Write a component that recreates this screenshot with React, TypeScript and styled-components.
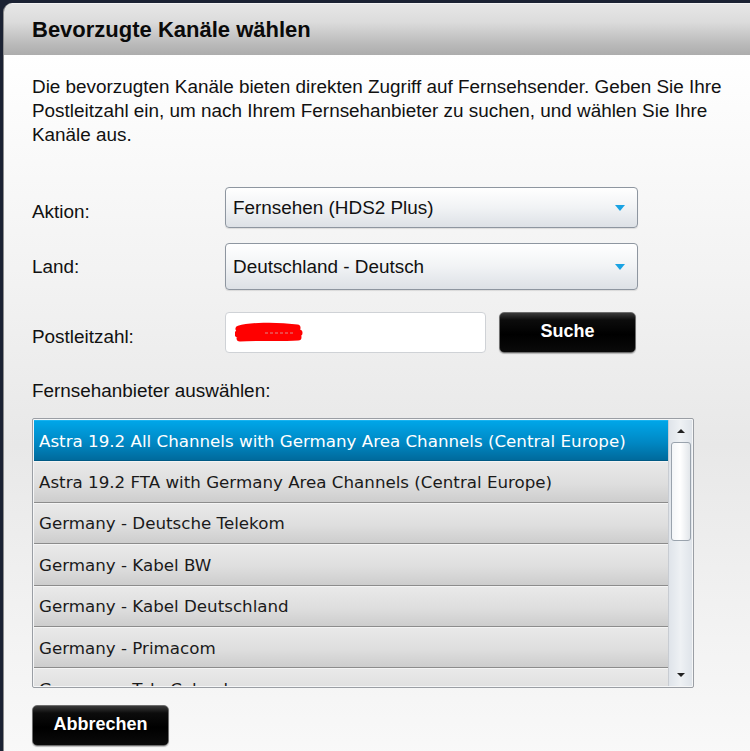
import React from "react";
import styled, { createGlobalStyle } from "styled-components";

const Global = createGlobalStyle`
  html, body { margin: 0; padding: 0; background: #1b2233; overflow: hidden; }
  body { width: 750px; height: 751px; }
`;

const Dialog = styled.div`
  margin: 3px 0 0 3px;
  width: 760px;
  height: 760px;
  border-top-left-radius: 9px;
  overflow: hidden;
  border-left: 1px solid #8c8c8c;
  display: flex;
  flex-direction: column;
  font-family: "Liberation Sans", Arial, sans-serif;
`;

const Header = styled.div`
  height: 52px;
  flex: none;
  box-sizing: border-box;
  padding-left: 28px;
  display: flex;
  align-items: center;
  background: linear-gradient(#e6e6e6 0%, #dcdcdc 35%, #b9b9b9 80%, #adadad 100%);
  border-top: 1px solid #f2f2f2;
`;

const Title = styled.h1`
  margin: 0;
  font-size: 22px;
  font-weight: bold;
  color: #0a0a0a;
`;

const Body = styled.div`
  flex: 1;
  padding: 20px 0 0 28px;
  background: linear-gradient(#ffffff 0%, #f3f3f3 30%, #e8e8e8 55%, #f4f4f4 85%, #f9f9f9 100%);
`;

const Intro = styled.p`
  margin: 0;
  width: 712px;
  font-size: 18.9px;
  line-height: 24px;
  color: #111;
`;

const Form = styled.div`
  margin-top: 40px;
  display: flex;
  flex-direction: column;
`;

const Row = styled.div<{ $h: number; $mt: number }>`
  display: flex;
  align-items: center;
  height: ${(p) => p.$h}px;
  margin-top: ${(p) => p.$mt}px;
`;

const Label = styled.div<{ $dy?: number }>`
  width: 193px;
  font-size: 18.9px;
  color: #111;
  transform: translateY(${(p) => p.$dy ?? 0}px);
`;

const Select = styled.div`
  box-sizing: border-box;
  width: 413px;
  height: 100%;
  border: 1px solid #8e96a0;
  border-radius: 4px;
  background: linear-gradient(#ffffff 0%, #f1f3f5 50%, #dde1e6 100%);
  display: flex;
  align-items: center;
  justify-content: space-between;
  padding: 0 12px 0 7px;
  font-size: 18.9px;
  color: #111;
  box-shadow: 0 1px 1px rgba(0,0,0,0.1);
`;

const Arrow = styled.span`
  width: 0;
  height: 0;
  border-left: 5px solid transparent;
  border-right: 5px solid transparent;
  border-top: 6px solid #1aa3e3;
`;

const Input = styled.div`
  box-sizing: border-box;
  width: 261px;
  height: 100%;
  border: 1px solid #cfd2d6;
  border-radius: 4px;
  background: #fff;
  display: flex;
  align-items: center;
  padding-left: 9px;
`;

const Button = styled.button<{ $w: number }>`
  box-sizing: border-box;
  width: ${(p) => p.$w}px;
  height: 41px;
  border: 1px solid #6e6e6e;
  border-radius: 5px;
  background: linear-gradient(#3a3a3a 0%, #0c0c0c 18%, #000 55%, #0a0a0a 100%);
  color: #fff;
  font-family: "Liberation Sans", Arial, sans-serif;
  font-size: 18px;
  font-weight: bold;
  padding: 0;
  box-shadow: 0 1px 1px rgba(0,0,0,0.25);
`;

const SearchButton = styled(Button)`
  margin-left: 13px;
  padding-bottom: 3px;
`;

const ListLabel = styled.div`
  margin-top: 27px;
  font-size: 18.9px;
  line-height: 22px;
  color: #111;
`;

const ListBox = styled.div`
  box-sizing: border-box;
  margin-top: 16px;
  width: 662px;
  height: 270px;
  border: 1px solid #9a9ea4;
  border-radius: 2px;
  background: #f5f6f7;
  padding: 1px;
  display: flex;
  overflow: hidden;
`;

const Items = styled.div`
  flex: 1;
  overflow: hidden;
`;

const Item = styled.div<{ $sel?: boolean }>`
  box-sizing: border-box;
  height: 41.4px;
  padding-left: 5px;
  display: flex;
  align-items: center;
  font-family: Tahoma, "DejaVu Sans", sans-serif;
  font-size: 16.7px;
  color: ${(p) => (p.$sel ? "#fff" : "#1a1a1a")};
  background: ${(p) =>
    p.$sel
      ? "linear-gradient(#00a6e8 0%, #0088c4 55%, #006a9c 100%)"
      : "linear-gradient(#e9e9e9 0%, #dedede 55%, #cdcdcd 100%)"};
  border-top: 1px solid ${(p) => (p.$sel ? "#19b3ef" : "#f4f4f4")};
  border-bottom: 1px solid ${(p) => (p.$sel ? "#005a85" : "#8c8c8c")};
`;

const Scrollbar = styled.div`
  width: 23px;
  flex: none;
  display: flex;
  flex-direction: column;
  align-items: center;
  background: linear-gradient(90deg, #dfe4ea, #eef1f4 50%, #dfe4ea);
  border-left: 1px solid #c8ccd2;
`;

const ScrollArrow = styled.div<{ $up?: boolean }>`
  height: 22px;
  display: flex;
  align-items: center;
  justify-content: center;
  &::after {
    content: "";
    width: 0;
    height: 0;
    border-left: 4px solid transparent;
    border-right: 4px solid transparent;
    ${(p) => (p.$up ? "border-bottom: 4px solid #222;" : "border-top: 4px solid #222;")}
  }
`;

const Track = styled.div`
  flex: 1;
  width: 100%;
  display: flex;
  justify-content: center;
`;

const Thumb = styled.div`
  box-sizing: border-box;
  width: 20px;
  height: 99px;
  border: 1px solid #9aa3ad;
  border-radius: 3px;
  background: linear-gradient(90deg, #f4f6f8, #ffffff 45%, #e2e6ea);
`;

const CancelWrap = styled.div`
  margin-top: 17px;
`;

const CancelButton = styled(Button)`
  padding-bottom: 2px;
`;

const items = [
  "Astra 19.2 All Channels with Germany Area Channels (Central Europe)",
  "Astra 19.2 FTA with Germany Area Channels (Central Europe)",
  "Germany - Deutsche Telekom",
  "Germany - Kabel BW",
  "Germany - Kabel Deutschland",
  "Germany - Primacom",
  "Germany - Tele Columbus",
];

export default function App() {
  return (
    <>
      <Global />
      <Dialog>
        <Header>
          <Title>Bevorzugte Kanäle wählen</Title>
        </Header>
        <Body>
          <Intro>
            Die bevorzugten Kanäle bieten direkten Zugriff auf Fernsehsender. Geben Sie Ihre
            Postleitzahl ein, um nach Ihrem Fernsehanbieter zu suchen, und wählen Sie Ihre
            Kanäle aus.
          </Intro>
          <Form>
            <Row $h={41} $mt={0}>
              <Label $dy={4}>Aktion:</Label>
              <Select>
                <span>Fernsehen (HDS2 Plus)</span>
                <Arrow />
              </Select>
            </Row>
            <Row $h={47} $mt={15}>
              <Label>Land:</Label>
              <Select>
                <span>Deutschland - Deutsch</span>
                <Arrow />
              </Select>
            </Row>
            <Row $h={41} $mt={22}>
              <Label $dy={4}>Postleitzahl:</Label>
              <Input>
                <svg width="68" height="24" viewBox="0 0 68 24">
                  <path
                    d="M4 8 C14 5, 40 4, 62 7 M3 13 C20 11, 45 10, 64 12 M5 17 C22 16, 46 17, 63 16"
                    stroke="#ff0000"
                    strokeWidth="7"
                    strokeLinecap="round"
                    fill="none"
                  />
                  <path d="M30 12 H60" stroke="#d88" strokeWidth="1" strokeDasharray="3 2" />
                </svg>
              </Input>
              <SearchButton $w={137}>Suche</SearchButton>
            </Row>
          </Form>
          <ListLabel>Fernsehanbieter auswählen:</ListLabel>
          <ListBox>
            <Items>
              {items.map((t, i) => (
                <Item key={t} $sel={i === 0}>
                  {t}
                </Item>
              ))}
            </Items>
            <Scrollbar>
              <ScrollArrow $up />
              <Track>
                <Thumb />
              </Track>
              <ScrollArrow />
            </Scrollbar>
          </ListBox>
          <CancelWrap>
            <CancelButton $w={137}>Abbrechen</CancelButton>
          </CancelWrap>
        </Body>
      </Dialog>
    </>
  );
}
